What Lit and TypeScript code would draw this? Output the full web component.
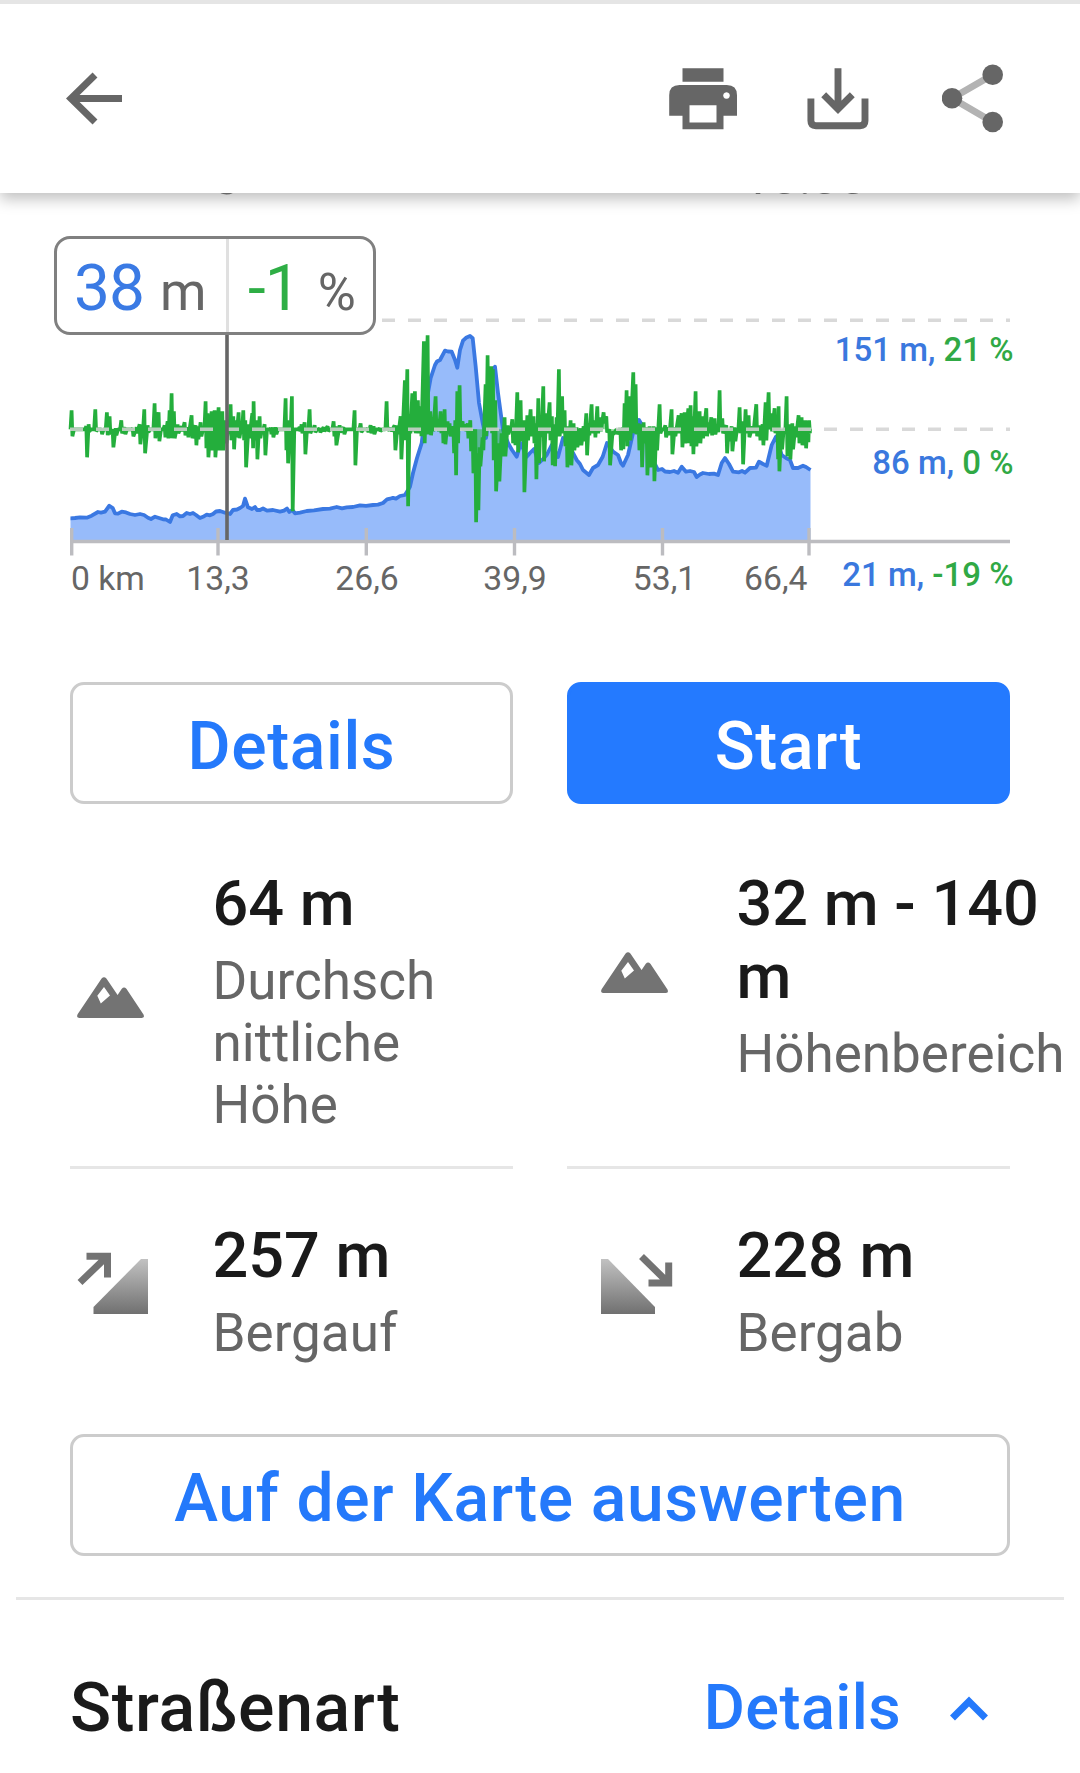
import { LitElement, html, svg, css } from "lit";
import { customElement } from "lit/decorators.js";

const ZERO_Y = 429.3;
const AXIS_Y = 541.5;

// Elevation profile as x,y pairs.
const ELEVATION = `70.5,518.3 75,518 80,517.3 86.7,517.7 91.7,515.7 98,512 101,512.6 105,511.7 109.3,505.7 112.7,508 115,513.3 118,513.6 121.7,511.7 126,512.4 130,514 135,515 140,514 144,515 148,517.7 151,519 155,516.7 159,518 163,519.3 166,519.5 170,522 172.7,515.3 176.7,514 180,516.4 183,516 186.7,513 190,514 193,513 196,515 200,518 203,516.8 206.7,514.7 210,515.3 213,514 216,511.5 220,511 225,512.7 230,514 233,510 237,509.5 240,508 243,506 245,498.7 248,507.3 252,509 255,507 257,510 260,510 263,508.5 267,510.7 273,510 280,511.7 284,510.6 287,508.5 289.3,512 292.3,510 295,513.3 300,512.6 306.7,511 314,510.4 323,509 330,508.6 336.7,507 342,508.4 346.7,507.3 353,507 360,505.3 366,505.8 373,505 378,504.6 383,503 387,499.4 390,498.7 393,497.8 396,498.6 400,496 405,495 410,486.7 413,473 417,458 421.7,443 426.7,400 430.7,378 435,365 437,361.5 440,360 445,350.7 448,351.5 451.7,351.7 455,360 457.3,367.7 460,350 463,340.7 466,337.8 470,336 472.7,338.3 475.7,366.7 479,403 482.7,423 486,438 489,410 491.7,373 495,366.7 498,393 503,430 508,443 512,450 516.7,456.7 520.7,443 526.7,456.7 530,453 534,449 539,463 543,459 546.7,455 551.7,445 558,457 563,438 567,442 573,453 576.7,460 580,464 583,470 589,475 593,468 598,465 602.7,456.7 607,443 613,451.7 618,455 621,463 623,465.7 628,455 633,433 639,420 643,426.7 648,443 653,460 658,470 662,469 665,471.5 670,472 674,471 678,472.7 681.7,466.7 686,471.7 690,471 694,472 696.7,477 700,474.5 703,473 709,474 714,473.6 718,475 721.7,463 725,458 729,464 733,471.7 739,472.3 742,471 745,472.7 750,468 756,467.7 759,461.7 763,464 766.7,465.7 771.7,445 776,436.7 781.7,455 786,458 790,460 793,468 798,468 803,465.7 806,467 810.5,470`;

// Gradient samples: x position, rise above zero, drop below zero.
const GRADIENT: number[][] = [
  [72, 19, 7], [86.7, 3, 28], [89, 5, 2], [95.7, 20, 2], [101.7, 0, 5], [107.3, 17, 6], [110, 13, 5], [113, 0, 18],
  [116, 1, 6], [121.7, 9, 4], [125, 2, 5], [133, 1, 7], [137, 2, 4], [140, 5, 15], [144.7, 20, 24], [148, 4, 3],
  [155, 26, 9], [159, 17, 12], [165, 4, 8], [168, 8, 9], [170, 19, 9], [172, 36, 9], [174.3, 18, 9], [178, 5, 4],
  [182, 3, 2], [185, 7, 6], [188, 2, 8], [192, 14, 9], [196, 4, 16], [198, 3, 10], [201, 7, 7], [206, 28, 19],
  [208, 16, 28], [212, 18, 21], [215, 19, 28], [219, 22, 21], [222.7, 18, 21], [226, 9, 14], [231, 25, 11],
  [233.7, 13, 20], [236, 9, 8], [239, 17, 9], [243.7, 19, 11], [245.7, 9, 38], [249, 5, 9], [252.7, 16, 19],
  [254, 28, 11], [257, 9, 30], [260, 13, 9], [265, 5, 26], [271, 1, 5], [273, 2, 8], [276, 2, 5], [286, 31, 21],
  [287.7, 9, 34], [292.3, 33, 82], [300, 2, 2], [302, 5, 4], [305, 7, 25], [310, 20, 4], [315, 4, 3], [320, 1, 3],
  [324, 2, 2], [328, 3, 2], [334, 8, 7], [336, 3, 16], [340, 4, 3], [344, 2, 5], [355, 19, 36], [361, 6, 3],
  [368, 1, 3], [371, 4, 4], [374, 3, 5], [380, 1, 2], [387, 28, 1], [391, 1, 2], [395, 4, 21], [398, 4, 5],
  [401, 13, 30], [405.3, 49, 11], [407.7, 60, 77], [410, 15, 4], [412.7, 36, 2], [415.3, 38, 4], [418.3, 29, 4],
  [421, 23, 7], [424.3, 88, 14], [428, 94, 5], [430.7, 18, 6], [433, 12, 2], [436, 33, 1], [438.5, 10, 2],
  [441, 18, 4], [443, 9, 14], [445, 20, 15], [448, 8, 5], [450, 6, 7], [453.7, 3, 24], [455.7, 9, 46],
  [457.7, 38, 14], [460, 44, 0], [463, 8, 1], [466, 5, 2], [468, 6, 9], [470.7, 9, 22], [473, 0, 44], [475.7, 0, 93],
  [478, -24, 81], [480, -18, 37], [483, -8, 21], [486, 45, 7], [488, 74, 0], [491.7, 63, 4], [493.3, 60, 31],
  [495.7, 29, 62], [499, -14, 52], [502, -4, 27], [505, 12, 27], [508, 4, 5], [512.7, 10, 14], [515, 4, 16],
  [517.7, 37, 23], [521, 29, 12], [524, 9, 63], [527.7, 14, 11], [531, 20, 7], [534, 13, 14], [536, 6, 50],
  [538.7, 31, 34], [541, 12, 8], [543.7, 43, 32], [546.7, 16, 4], [550, 27, 11], [552.3, 13, 36], [554.7, 5, 37],
  [557, 12, 5], [559.3, 60, 7], [562.5, 33, 4], [565, 19, 17], [567, 3, 38], [571, 9, 36], [574, 6, 21],
  [577, 2, 18], [581, 1, 16], [584, 3, 12], [586.7, 16, 26], [589, 6, 6], [592, 25, 4], [595, 9, 8], [597.7, 23, 4],
  [600.5, 12, 2], [604, 17, -6], [606.7, 13, 3], [609.7, 0, 36], [613, -2, 5], [617, 0, 5], [620.7, 1, 21],
  [623, 2, 20], [625, 26, 4], [627, 39, 17], [630, 33, 11], [633.7, 57, 4], [636, 45, 5], [639, 6, 21],
  [641.7, 5, 38], [644, 7, 14], [647, 2, 46], [650, 3, 38], [654, 3, 52], [656.7, 2, 21], [660, 25, 4],
  [665.7, 4, 8], [669, 2, 6], [672, 20, 25], [675, 2, 7], [679, 14, 4], [682, 16, 18], [685, 17, 14],
  [688.7, 21, 14], [691, 24, 17], [693, 13, 25], [696, 38, 17], [700, 18, 14], [702.7, 13, 9], [706.7, 21, 7],
  [709, 7, 4], [711.7, 12, 6], [715, 11, 5], [718, 5, 3], [720, 39, 0], [722.7, 11, 4], [726.7, 4, 24],
  [729, 0, 12], [732, 3, 22], [735, 2, 12], [740, 22, 4], [742.7, 8, 35], [746, 20, 4], [749, 14, 8], [753, 3, 4],
  [756.7, 25, 7], [760, 4, 11], [763, 5, 16], [766, 27, 11], [769, 37, 0], [771.7, 16, 2], [775, 21, 4],
  [777.7, 10, 30], [779, 23, 42], [781.7, 0, 20], [787, 33, 27], [790, 5, 30], [792.7, 6, 20], [795.7, 3, 8],
  [799, 14, 14], [802, 12, 16], [805.7, 9, 19], [808, 8, 13], [809.5, 9, 4],
];

function gradientPoints(): string {
  const out: string[] = [`70.5,${ZERO_Y}`];
  let last = 70;
  for (const [x, up, down] of GRADIENT) {
    if (x - last > 4.5) {
      out.push(`${Math.min(last + 2, x - 2)},${ZERO_Y}`, `${x - 1.6},${ZERO_Y}`);
    }
    out.push(`${x - 0.4},${ZERO_Y - up}`, `${x + 0.4},${ZERO_Y + down}`);
    last = x;
  }
  out.push(`810,${ZERO_Y}`);
  return out.join(" ");
}

const TICKS = [
  { x: 71.7, label: "0 km", at: 71, anchor: "start" },
  { x: 218, label: "13,3", at: 218, anchor: "middle" },
  { x: 366.3, label: "26,6", at: 367, anchor: "middle" },
  { x: 514.5, label: "39,9", at: 515, anchor: "middle" },
  { x: 662.5, label: "53,1", at: 664.5, anchor: "middle" },
  { x: 809, label: "66,4", at: 807.5, anchor: "end" },
];

const LEVELS = [
  { y: 360.5, height: "151 m, ", slope: "21 %" },
  { y: 473.5, height: "86 m, ", slope: "0 %" },
  { y: 585.7, height: "21 m, ", slope: "-19 %" },
];

@customElement("elevation-chart")
export class ElevationChart extends LitElement {
  static styles = css`
    :host { display: block; position: relative; height: 489px; }
    .plot { display: block; width: 1080px; height: 489px; font-family: Roboto, sans-serif; }
    .area { fill: #97bbfa; }
    .profile { fill: none; stroke: #3a78e2; stroke-width: 3.8; stroke-linejoin: round; }
    .slope { fill: #24b03a; fill-opacity: 0.5; stroke: #24ae3c; stroke-width: 3.7; stroke-linejoin: bevel; }
    .grid { stroke: #d2d2d2; stroke-opacity: 0.85; stroke-width: 3.4; stroke-dasharray: 13 13; }
    .axis { stroke: #bcbcc0; stroke-width: 3.4; }
    .cursor { stroke: #666; stroke-width: 3.6; }
    .tick { fill: #666; font-size: 33.7px; }
    .level { font-size: 33px; font-weight: 500; text-anchor: end; }
    .blue { fill: #3a78de; }
    .green { fill: #30a945; }
    .readout {
      position: absolute; left: 54px; top: 43px; width: 322px; height: 99px; box-sizing: border-box;
      border: 3px solid #808080; border-radius: 16px; background: #fff; display: grid;
      grid-template-columns: 169px 1fr; font-family: Roboto, sans-serif; line-height: 93px; white-space: nowrap;
    }
    .cell { display: flex; align-items: baseline; gap: 16px; padding-left: 17px; padding-top: 5px; height: 88px; line-height: 89px; }
    .cell + .cell { border-left: 3px solid #e0e0e0; padding-left: 19px; gap: 18px; }
    .num { font-size: 64px; color: #3a7ae4; letter-spacing: -1px; }
    .num.up { color: #2eae45; }
    .unit { font-size: 53px; color: #666; }
    .unit.pct { font-size: 52px; }
  `;

  render() {
    return html`
      <svg class="plot" viewBox="0 193 1080 489">
        <polygon class="area" points="70.5,${AXIS_Y} ${ELEVATION} 810.5,${AXIS_Y}"></polygon>
        <polyline class="profile" points=${ELEVATION}></polyline>
        <polyline class="slope" points=${gradientPoints()}></polyline>
        <path class="grid" d="M70 320.3H1010M70 ${ZERO_Y}H1010"></path>
        <path class="axis" d="M70 ${AXIS_Y}H1010"></path>
        ${TICKS.map((t) => svg`
          <path class="axis" d="M${t.x} 528V555.5"></path>
          <text class="tick" x=${t.at} y="589.5" text-anchor=${t.anchor}>${t.label}</text>`)}
        ${LEVELS.map((l) => svg`
          <text class="level" x="1013.5" y=${l.y}><tspan class="blue">${l.height}</tspan><tspan class="green">${l.slope}</tspan></text>`)}
        <path class="cursor" d="M227 330V540"></path>
      </svg>
      <div class="readout">
        <div class="cell"><span class="num">38</span><span class="unit">m</span></div>
        <div class="cell"><span class="num up">-1</span><span class="unit pct">%</span></div>
      </div>
    `;
  }
}

const mountain = html`
  <svg class="icon" width="67" height="41" viewBox="0 0 67 41">
    <path fill="#737373" fill-rule="evenodd"
      d="M24.6 1.4Q27 -1 29.4 1.4L40.6 18 44.8 11.7Q47 9.2 49.4 11.7L66.5 37.5Q68 41 64.5 41H2.5Q-1 41 .6 37.3ZM27 10 20.3 18.8 23.8 26.4 33 18.6Z"></path>
  </svg>`;

const uphill = html`
  <svg class="icon slope" width="71" height="62" viewBox="0 0 71 62">
    <defs><linearGradient id="fade" x1="0" y1="0" x2="0" y2="1">
      <stop offset="0" stop-color="#c2c2c2"></stop><stop offset="1" stop-color="#707070"></stop>
    </linearGradient></defs>
    <path fill="url(#fade)" d="M16.5 62V55L64 7H71V62Z"></path>
    <path fill="none" stroke="#737373" stroke-width="7" d="M3 30.5 30 4.5M9.5 4.2H30.5V25.5"></path>
  </svg>`;

const downhill = html`
  <svg class="icon slope" width="71" height="62" viewBox="0 0 71 62">
    <defs><linearGradient id="fade" x1="0" y1="0" x2="0" y2="1">
      <stop offset="0" stop-color="#c2c2c2"></stop><stop offset="1" stop-color="#707070"></stop>
    </linearGradient></defs>
    <path fill="url(#fade)" d="M0 62V7H7L54 55V62Z"></path>
    <path fill="none" stroke="#737373" stroke-width="7" d="M40.5 4.5 67 30.5M47.5 31H67.7V10.5"></path>
  </svg>`;

@customElement("app-root")
export class AppRoot extends LitElement {
  static styles = css`
    :host {
      display: block; height: 1773px; overflow: hidden; background: #fff;
      font-family: Roboto, sans-serif; color: #1a1a1a;
    }
    .bar {
      position: relative; z-index: 2; box-sizing: border-box; height: 193px; background: #fff;
      border-top: 4px solid #e5e5e5; display: flex; align-items: center; padding: 0 76px 0 66px;
      box-shadow: 0 6px 14px rgba(0, 0, 0, 0.25);
    }
    .bar svg { display: block; }
    .actions { display: flex; align-items: center; margin-left: auto; gap: 70px; }
    .share { margin-left: 3.4px; }
    .peek {
      position: relative; z-index: 3; display: flex; justify-content: space-between; align-items: flex-start;
      height: 2px; margin-bottom: -2px; overflow: hidden;
      padding: 0 213px; font-size: 50px; line-height: 50px; color: #666;
    }
    .peek .left { margin-top: -51px; }
    .peek .right { margin-top: -41px; }
    .buttons { display: grid; grid-template-columns: 1fr 1fr; gap: 54px; padding: 0 70px; }
    .button {
      box-sizing: border-box; height: 122px; border: 3px solid #ccc; border-radius: 14px;
      display: flex; align-items: center; justify-content: center; background: #fff;
      color: #2479fb; font-size: 66px; line-height: 77px; font-weight: 500; letter-spacing: 0.6px;
      font-family: inherit; padding: 7px 0 0; margin: 0; white-space: nowrap;
    }
    .button.primary { background: #247aff; border-color: #247aff; color: #fff; }
    .stats { display: grid; grid-template-columns: 1fr 1fr; column-gap: 54px; padding: 63px 70px 0; }
    .stat { display: grid; grid-template-columns: 135.5px 1fr; align-items: center; align-content: start; padding-left: 7px; }
    .stat.second { padding-left: 34px; }
    .ruled { border-bottom: 3px solid #e6e6e6; height: 298.5px; }
    .lower { padding-top: 50px; height: 265.5px; box-sizing: border-box; }
    .icon { display: block; margin-top: -8px; overflow: visible; }
    .icon.slope { margin-top: -16px; }
    .text { white-space: nowrap; min-width: 0; }
    .value { font-size: 63px; line-height: 73px; font-weight: 500; margin-bottom: 10px; }
    .name { font-size: 53px; line-height: 62px; color: #666; }
    .wide { margin: 0 70px; width: 940px; }
    .rule { height: 3px; background: #e6e6e6; margin: 41px 16px 0; }
    .section { display: flex; align-items: baseline; padding: 70px 92px 0 70px; font-weight: 500; white-space: nowrap; }
    .title { font-size: 68px; line-height: 77px; letter-spacing: 0.6px; }
    .more { margin-left: auto; font-size: 63px; color: #2479fb; letter-spacing: 0.4px; position: relative; top: -2px; }
    .chevron { display: block; margin-left: 49px; align-self: center; }
  `;

  render() {
    return html`
      <header class="bar">
        <svg width="56" height="54" viewBox="65.5 72 56 54">
          <path fill="none" stroke="#666" stroke-width="7" d="M94.5 75 70.5 98.5 94.5 122M70 98.5H121.5"></path>
        </svg>
        <div class="actions">
          <svg width="68" height="70" viewBox="668.5 63.5 68 70">
            <path fill="#666" fill-rule="evenodd"
              d="M682 67.8H723V81.3H682ZM679 84.5H726.3Q736.5 84.5 736.5 94.7V115.2H723V128.7H682V115.2H668.7V94.7Q668.7 84.5 679 84.5ZM689 104.8V122H716V104.8ZM726 91.7A3.3 3.3 0 1 0 726.01 91.7Z"></path>
          </svg>
          <svg width="62" height="70" viewBox="806.5 63.5 62 70">
            <path fill="none" stroke="#666" stroke-width="6.9"
              d="M810.4 98V120.3Q810.4 125.2 815.3 125.2H859.6Q864.5 125.2 864.5 120.3V98M837.5 67.8V107M823.2 94.2 837.5 108.5 851.8 94.2"></path>
          </svg>
          <svg class="share" width="62" height="70" viewBox="942 64 62 70">
            <path fill="none" stroke="#b3b3b3" stroke-width="6.8" d="M992.7 74.7 952 98.3 992.7 122"></path>
            <g fill="#666"><circle cx="992.7" cy="74.7" r="10.3"></circle><circle cx="952" cy="98.3" r="10.3"></circle><circle cx="992.7" cy="122" r="10.3"></circle></g>
          </svg>
        </div>
      </header>
      <div class="peek"><span class="left">g</span><span class="right">10:00</span></div>
      <elevation-chart></elevation-chart>
      <div class="buttons">
        <button class="button">Details</button>
        <button class="button primary">Start</button>
      </div>
      <div class="stats">
        <div class="stat ruled">${mountain}
          <div class="text"><div class="value">64 m</div><div class="name">Durchsch<br />nittliche<br />Höhe</div></div>
        </div>
        <div class="ruled"><div class="stat second">${mountain}
          <div class="text"><div class="value">32 m - 140<br />m</div><div class="name">Höhenbereich</div></div>
        </div></div>
        <div class="stat lower">${uphill}
          <div class="text"><div class="value">257 m</div><div class="name">Bergauf</div></div>
        </div>
        <div class="stat second lower">${downhill}
          <div class="text"><div class="value">228 m</div><div class="name">Bergab</div></div>
        </div>
      </div>
      <button class="button wide">Auf der Karte auswerten</button>
      <div class="rule"></div>
      <div class="section">
        <span class="title">Straßenart</span>
        <span class="more">Details</span>
        <svg class="chevron" width="38" height="26" viewBox="0 0 38 26">
          <path fill="none" stroke="#2479fb" stroke-width="7" d="M2.5 22 19 5.5 35.5 22"></path>
        </svg>
      </div>
    `;
  }
}
